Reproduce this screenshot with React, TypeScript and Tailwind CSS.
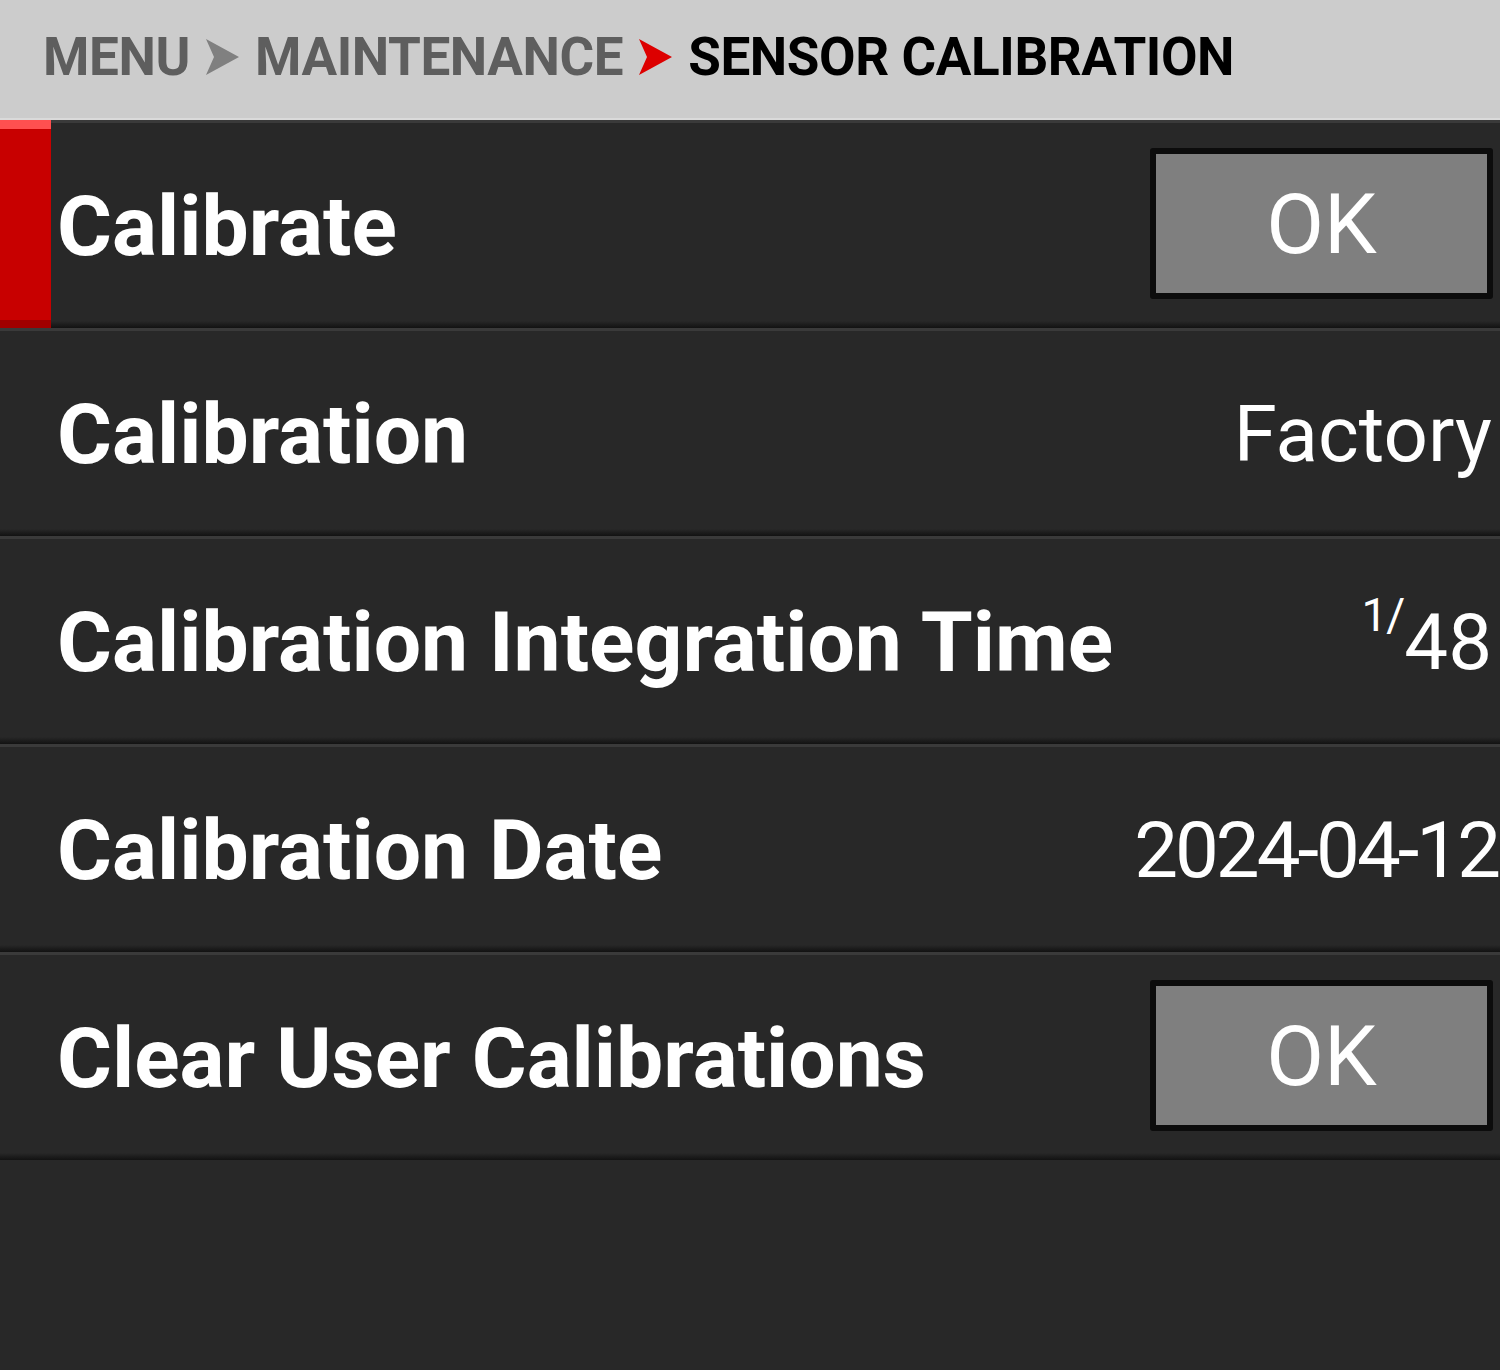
import React from "react"

interface RowProps {
    label: string
    selected?: boolean
    children?: React.ReactNode
}

const OkButton: React.FC = () => (
    <div className="w-[343px] h-[151px] bg-[#0c0c0c] rounded-[3px] p-[6px]">
        <div className="w-full h-full bg-[#7f7f7f] flex items-center justify-center pt-[4px]">
            <span className="text-white text-[84px] font-normal leading-none">OK</span>
        </div>
    </div>
)

const Row: React.FC<RowProps> = ({ label, selected, children }) => {
    return (
        <div className="h-[208px] flex flex-col">
            <div className="h-[3px] bg-[#3a3a3a]"></div>
            <div className="flex-1 flex items-center relative">
                {selected && (
                    <div className="absolute left-0 top-[-3px] bottom-[-7px] w-[51px] flex flex-col">
                        <div className="h-[9px] bg-[#ff5050]"></div>
                        <div className="flex-1 bg-[#c80000]"></div>
                        <div className="h-[8px] bg-[#a00000]"></div>
                    </div>
                )}
                <p className="pl-[57px] pt-[9px] text-white font-bold text-[84px] leading-none">{label}</p>
                <div className="ml-auto flex items-center">{children}</div>
            </div>
            <div className="h-[7px] bg-gradient-to-b from-[#282828] to-[#121212]"></div>
        </div>
    )
}

const Chevron: React.FC<{ color: string }> = ({ color }) => (
    <svg width="33" height="36" viewBox="0 0 33 36" className="mx-[16px]">
        <path d="M0 0 L33 18 L0 36 L8 18 Z" fill={color} />
    </svg>
)

export default function App() {
    return (
        <div className="w-[1500px] h-[1370px] bg-[#282828] overflow-hidden" style={{ fontFamily: "Roboto, 'Liberation Sans', sans-serif" }}>
            <div className="h-[118px] bg-[#cccccc] flex items-center pl-[43px] pb-[4px] font-bold text-[53px] leading-none tracking-[-0.4px]">
                <span className="text-[#5e5e5e]">MENU</span>
                <Chevron color="#808080" />
                <span className="text-[#5e5e5e]">MAINTENANCE</span>
                <Chevron color="#dd0000" />
                <span className="text-black">SENSOR CALIBRATION</span>
            </div>
            <div className="h-[2px] bg-[#dadada]"></div>
            <Row label="Calibrate" selected>
                <div className="pr-[7px] pt-[2px]"><OkButton /></div>
            </Row>
            <Row label="Calibration">
                <span className="text-white text-[78px] leading-none pt-[9px] pr-[8px]">Factory</span>
            </Row>
            <Row label="Calibration Integration Time">
                <span className="text-white text-[78px] leading-none pt-[9px] pr-[8px] flex items-start">
                    <span className="text-[46px] leading-none mt-[-12px] tracking-[-1px]">1/</span>
                    <span>48</span>
                </span>
            </Row>
            <Row label="Calibration Date">
                <span className="text-white text-[78px] leading-none pt-[9px] tracking-[-3px] pr-[2px]">2024-04-12</span>
            </Row>
            <Row label="Clear User Calibrations">
                <div className="pr-[7px] pt-[2px]"><OkButton /></div>
            </Row>
        </div>
    )
}
